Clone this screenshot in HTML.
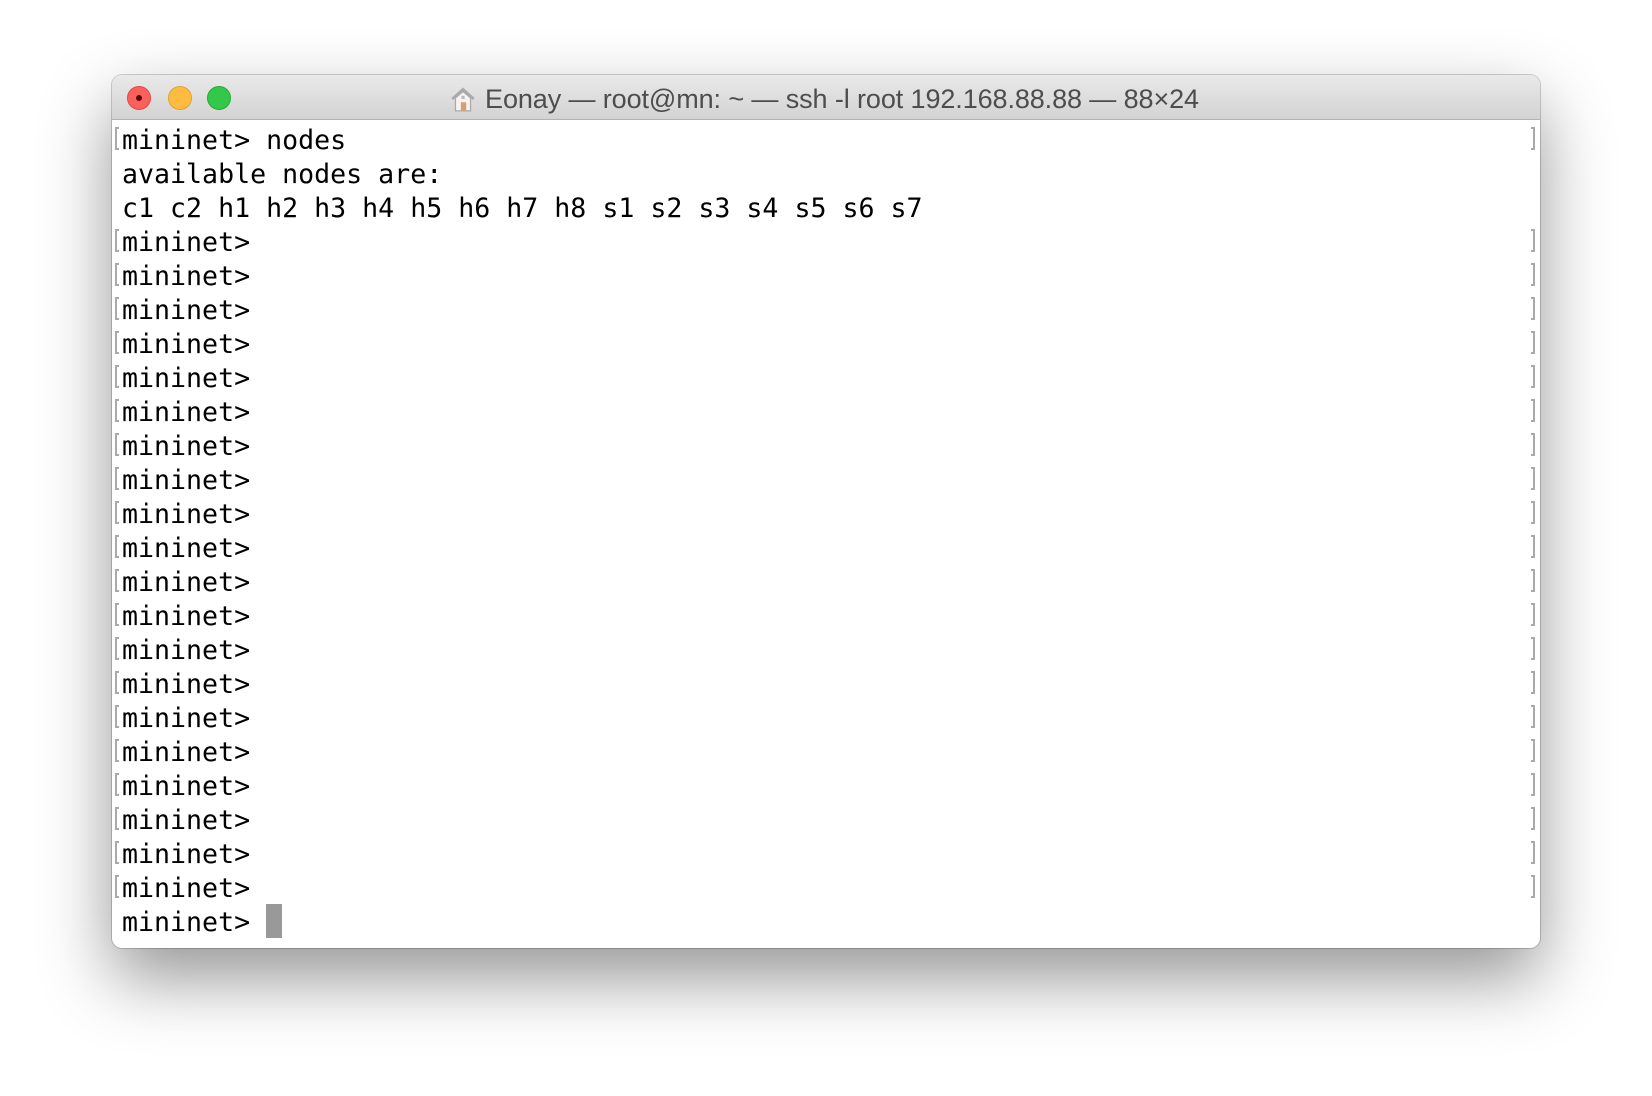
<!DOCTYPE html>
<html><head><style>
html,body{margin:0;padding:0;width:1652px;height:1096px;overflow:hidden;background:#fff}
.win{position:absolute;left:112px;top:75px;width:1428px;height:873px;border-radius:10px;background:#fff;
box-shadow:0 30px 70px rgba(0,0,0,0.42),0 0 0 1px rgba(0,0,0,0.18);overflow:hidden}
.tb{position:absolute;left:0;top:0;width:100%;height:44px;background:linear-gradient(#e9e9e9,#d3d3d3);border-bottom:1px solid #b4b4b4}
.dot{position:absolute;top:11px;width:24px;height:24px;border-radius:50%;box-sizing:border-box}
.title{position:absolute;left:0;right:0;top:2px;height:44px;line-height:44px;text-align:center;font-family:"Liberation Sans",sans-serif;font-size:27px;color:#4d4d4d;padding-right:4px;letter-spacing:-0.1px}
.term{position:absolute;left:10px;top:49px;font-family:"DejaVu Sans Mono",monospace;font-size:26.6px;line-height:34px;color:#000;white-space:pre}
.lb,.rb{position:absolute;width:4px;height:23px;border:2px solid #aaa;box-sizing:border-box}
.lb{left:3px;border-right:none}
.rb{left:1419px;border-left:none}
.cur{position:absolute;left:154px;top:829px;width:16px;height:34px;background:#999}
</style></head><body>
<div class="win">
<div class="tb">
<div class="dot" style="left:15px;background:#fc605c;border:1px solid #de4a44"><div style="position:absolute;left:8px;top:8px;width:6px;height:6px;border-radius:50%;background:#5a0a06"></div></div>
<div class="dot" style="left:56px;background:#fdbc40;border:1px solid #dea236"></div>
<div class="dot" style="left:95px;background:#34c84a;border:1px solid #27aa35"></div>
<div class="title"><svg width="28" height="28" viewBox="0 0 26 26" style="vertical-align:-5px;margin-right:8px"><path d="M3 13 L13 4 L23 13" fill="none" stroke="#aaa" stroke-width="2.5"/><path d="M6 12 V24 H20 V12 L13 6 Z" fill="#f4f4f4" stroke="#aaa" stroke-width="1.2"/><rect x="11" y="16" width="5" height="8" fill="#d8a070"/><rect x="11.5" y="10" width="3" height="3" fill="#bbb"/></svg>Eonay — root@mn: ~ — ssh -l root 192.168.88.88 — 88×24</div>
</div>
<div class="term">mininet&gt; nodes
available nodes are:
c1 c2 h1 h2 h3 h4 h5 h6 h7 h8 s1 s2 s3 s4 s5 s6 s7
mininet&gt;
mininet&gt;
mininet&gt;
mininet&gt;
mininet&gt;
mininet&gt;
mininet&gt;
mininet&gt;
mininet&gt;
mininet&gt;
mininet&gt;
mininet&gt;
mininet&gt;
mininet&gt;
mininet&gt;
mininet&gt;
mininet&gt;
mininet&gt;
mininet&gt;
mininet&gt;
mininet&gt; </div>
<div class="cur"></div>
</div>
<script>
var w=document.querySelector('.win');var rows=[0,3,4,5,6,7,8,9,10,11,12,13,14,15,16,17,18,19,20,21,22];
rows.forEach(function(r){var t=52+r*34;['lb','rb'].forEach(function(c){var d=document.createElement('div');d.className=c;d.style.top=t+'px';w.appendChild(d);});});
</script>
</body></html>
